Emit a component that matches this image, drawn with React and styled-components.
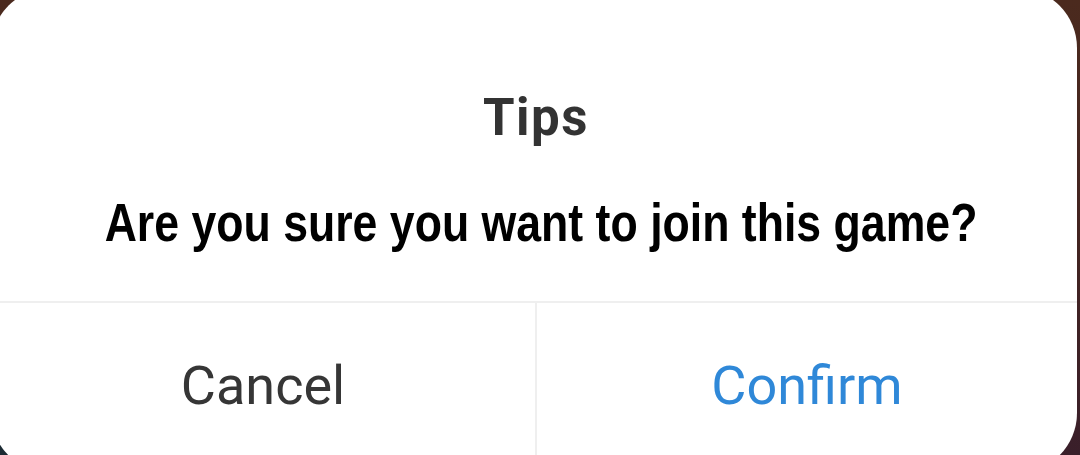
import React from "react";
import styled, { createGlobalStyle } from "styled-components";

const Global = createGlobalStyle`
  html, body { margin: 0; padding: 0; }
  body {
    width: 1080px;
    height: 455px;
    overflow: hidden;
    background:
      radial-gradient(circle at 0% 100%, #1c2b33 0px, #1c2b33 30px, transparent 80px),
      linear-gradient(180deg, #4b2a1e 0%, #432420 50%, #3a1f2a 100%);
    font-family: Roboto, "Noto Sans", sans-serif;
  }
`;

const Dialog = styled.div`
  box-sizing: border-box;
  width: 1086px;
  height: 485px;
  margin: -12px 0 0 -9px;
  background: #ffffff;
  border-radius: 60px;
  display: flex;
  flex-direction: column;
  overflow: hidden;
`;

const Body = styled.div`
  display: flex;
  flex-direction: column;
  align-items: center;
  padding-top: 104px;
  height: 315px;
  box-sizing: border-box;
  border-bottom: 2px solid #efefef;
`;

const Title = styled.div`
  font-family: Roboto, sans-serif;
  font-weight: 700;
  font-size: 51px;
  line-height: 1;
  letter-spacing: 1.5px;
  color: #333333;
  padding-left: 4px;
`;

const Message = styled.div`
  margin-top: 53px;
  font-family: "Liberation Sans", Arial, sans-serif;
  font-weight: 700;
  font-size: 53px;
  line-height: 1;
  color: #000000;
  white-space: nowrap;
  transform: scaleX(0.842);
  padding-left: 16px;
`;

const Actions = styled.div`
  flex: 1;
  display: grid;
  grid-template-columns: 544px 1fr;
`;

const ActionButton = styled.button`
  border: none;
  background: transparent;
  padding: 0 0 6px 0;
  font-family: Roboto, sans-serif;
  font-weight: 400;
  font-size: 54px;
  color: ${(p) => (p.$primary ? "#2f88d8" : "#363636")};
  border-left: ${(p) => (p.$primary ? "2px solid #efefef" : "none")};
  cursor: pointer;
`;

export default function App() {
  return (
    <>
      <Global />
      <Dialog>
        <Body>
          <Title>Tips</Title>
          <Message>Are you sure you want to join this game?</Message>
        </Body>
        <Actions>
          <ActionButton>Cancel</ActionButton>
          <ActionButton $primary>Confirm</ActionButton>
        </Actions>
      </Dialog>
    </>
  );
}
